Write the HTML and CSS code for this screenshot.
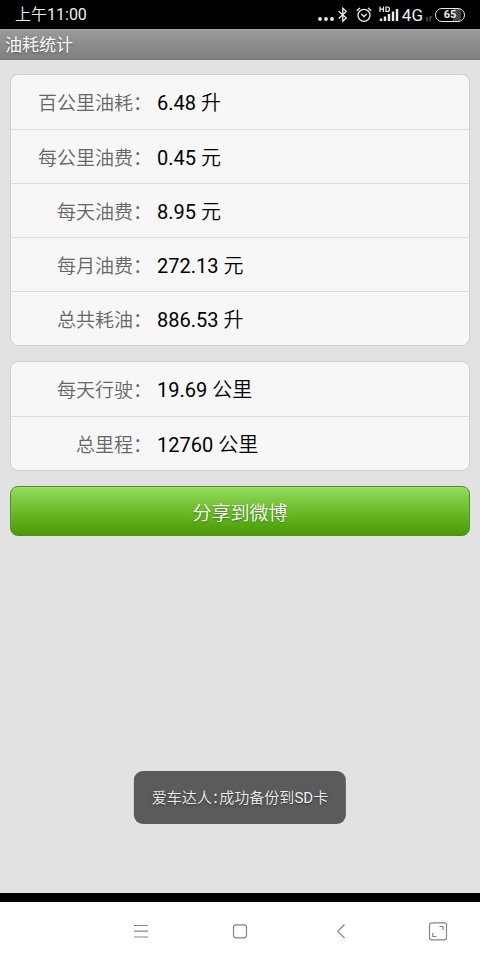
FILE: index.html
```html
<!DOCTYPE html>
<html lang="zh-CN">
<head>
<meta charset="utf-8">
<meta name="viewport" content="width=device-width, initial-scale=1">
<title>油耗统计</title>
<link rel="stylesheet" href="styles.css">
</head>
<body>
<div class="status">
  <span class="time"><span class="cjk">上午</span>11:00</span>
  <div class="indicators">
    <svg width="18" height="20" viewBox="0 0 18 20" fill="#eee"><circle cx="3" cy="14" r="1.9"/><circle cx="9" cy="14" r="1.9"/><circle cx="15" cy="14" r="1.9"/></svg>
    <svg width="10" height="20" viewBox="0 0 10 20" fill="none" stroke="#eee" stroke-width="1.3"><path d="M.7 6.2 8.3 13 4.8 16.3V3.2L8.3 6.5.7 13.5"/></svg>
    <svg class="alarm" width="16" height="20" viewBox="0 0 16 20" fill="none" stroke="#eee" stroke-width="1.3"><circle cx="8" cy="10.3" r="6"/><path d="M5.3 9 8 11.500 10.800 9M.8 5.800 4 3M15.200 5.800 12 3"/></svg>
    <svg class="signal" width="20" height="20" viewBox="0 0 20 20" fill="none" stroke="#eee"><path d="M1 1.500V7M4.500 1.500V7M1 4.200H4.500M7 2V6.500H8Q10.500 6.500 10.500 4.200T8 2Z" stroke-width="1.200"/><path d="M2 16V13.500M6 16V11.500M10 16V9M14 16V6.500M18 16V4" stroke-width="2.400"/></svg>
    <span class="network">4G</span>
    <svg width="6" height="20" viewBox="0 0 6 20" fill="none" stroke="#777"><path d="M1 12V16.500M4 16.500V12H6"/></svg>
    <span class="battery">65</span>
  </div>
</div>
<header class="title-bar"><h1>油耗统计</h1></header>
<main class="content">
  <dl class="card">
    <div class="row"><dt>百公里油耗：</dt><dd>6.48 <span class="cjk">升</span></dd></div>
    <div class="row"><dt>每公里油费：</dt><dd>0.45 <span class="cjk">元</span></dd></div>
    <div class="row"><dt>每天油费：</dt><dd>8.95 <span class="cjk">元</span></dd></div>
    <div class="row"><dt>每月油费：</dt><dd>272.13 <span class="cjk">元</span></dd></div>
    <div class="row"><dt>总共耗油：</dt><dd>886.53 <span class="cjk">升</span></dd></div>
  </dl>
  <dl class="card">
    <div class="row"><dt>每天行驶：</dt><dd>19.69 <span class="cjk">公里</span></dd></div>
    <div class="row"><dt>总里程：</dt><dd>12760 <span class="cjk">公里</span></dd></div>
  </dl>
  <button class="share" type="button">分享到微博</button>
  <div class="toast" role="status"><span class="cjk">爱车达人：成功备份到</span>SD<span class="cjk">卡</span></div>
</main>
<nav class="nav">
  <button type="button" aria-label="菜单"><svg width="20" height="20" viewBox="0 0 20 20"><path d="M3 4.500H17M3 10.200H17M3 16H17"/></svg></button>
  <button type="button" aria-label="主页"><svg width="20" height="20" viewBox="0 0 20 20"><rect x="3.500" y="3.800" width="13" height="13" rx="2.500"/></svg></button>
  <button type="button" aria-label="返回"><svg width="20" height="20" viewBox="0 0 20 20"><path d="M15.500 3.500 8.800 10.300 15.500 17"/></svg></button>
  <button type="button" aria-label="全屏"><svg width="20" height="20" viewBox="0 0 20 20"><rect x="1.500" y="1.800" width="17" height="17" rx="2"/><path d="M11.500 5.500H15V9M4.800 12V15.500H8.500"/></svg></button>
</nav>
</body>
</html>
```
FILE: styles.css
```css
* { box-sizing: border-box; }

body {
  margin: 0;
  min-height: 100vh;
  display: flex;
  flex-direction: column;
  background: #e2e2e2;
  font-family: Roboto, "Noto Sans CJK SC", sans-serif;
}

.cjk { font-weight: 350; }

.status {
  height: 29px;
  padding: 0 15px;
  display: flex;
  align-items: center;
  justify-content: space-between;
  background: #000;
  color: #eee;
}

.time { font-size: 16px; line-height: 30px; }

.indicators { display: flex; align-items: center; gap: 3px; }
.indicators svg { flex: none; }
.alarm { margin-left: 5px; }
.signal { margin-left: 4px; }
.network { font-size: 17px; line-height: 30px; }

.battery {
  width: 30px;
  height: 14px;
  border: 1px solid #eee;
  border-radius: 7px;
  background: linear-gradient(90deg, #000 60%, #444 60%, #444 90%, #000 90%);
  font-size: 11px;
  font-weight: 700;
  line-height: 12px;
  text-align: center;
}

.title-bar {
  height: 31px;
  padding: 0 5px;
  border-top: 1px solid #a5a5a5;
  border-bottom: 1px solid #777;
  background: linear-gradient(#9a9a9a, #808080);
}

h1 {
  margin: 0;
  color: #fff;
  font-size: 17px;
  font-weight: 400;
  line-height: 30px;
  text-shadow: 0 1px 2px #555;
}

.content {
  position: relative;
  flex: 1;
  padding: 14px 10px;
  display: flex;
  flex-direction: column;
  gap: 15px;
}

.card {
  margin: 0;
  border: 1px solid #d0d0d0;
  border-radius: 8px;
  background: #f7f7f7;
}

.row {
  height: 54px;
  display: flex;
  align-items: baseline;
  line-height: 56px;
}

.row + .row { border-top: 1px solid #dedede; }

dt {
  flex: 0 0 141px;
  color: #666;
  font-size: 19px;
  font-weight: 350;
  text-align: right;
}

dd {
  margin: 0 0 0 5px;
  color: #000;
  font-size: 20px;
}

.share {
  height: 50px;
  border: 1px solid #4f8a2c;
  border-radius: 8px;
  background: linear-gradient(#93dc5a, #479a00);
  box-shadow: inset 0 1px 1px #a4e274;
  color: #fff;
  font: 350 19px Roboto, "Noto Sans CJK SC", sans-serif;
  text-shadow: 0 1px 2px #397a10;
}

.toast {
  position: absolute;
  bottom: 69px;
  left: 50%;
  transform: translateX(-50%);
  padding: 16px 18px 14px;
  border-radius: 9px;
  background: #5b5b5b;
  color: #eee;
  font-size: 15px;
  line-height: 23px;
  white-space: nowrap;
  font-feature-settings: "halt";
  text-shadow: 0 1px 2px #333;
}

.nav {
  height: 67px;
  padding: 0 32px 0 27.3%;
  display: flex;
  align-items: center;
  justify-content: space-between;
  border-top: 9px solid #000;
  background: #fff;
}

.nav button {
  display: flex;
  padding: 0;
  border: 0;
  background: none;
}

.nav svg { fill: none; stroke: #858585; stroke-width: 1.2; }
```
